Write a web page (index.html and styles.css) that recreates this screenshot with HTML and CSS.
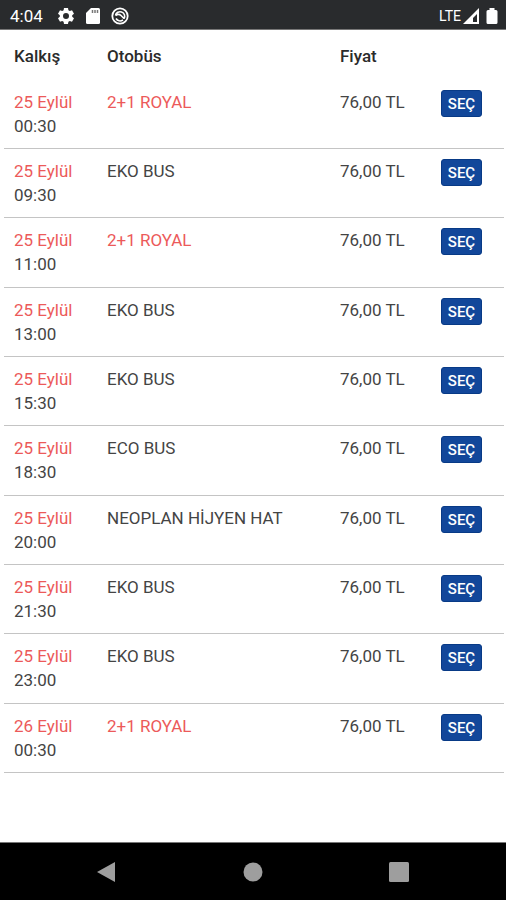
FILE: index.html
```html
<!DOCTYPE html>
<html lang="tr">
<head>
<meta charset="utf-8">
<meta name="viewport" content="width=device-width, initial-scale=1">
<title>Seferler</title>
<link rel="stylesheet" href="styles.css">
</head>
<body>
<header class="status">
  <span class="clock">4:04</span>
  <svg class="icon" viewBox="0 0 18 18" aria-hidden="true"><path fill="#fff" fill-rule="evenodd" d="M7 1h4l.4 2.3 1.400.8L15 3.300l2 3.400-1.800 1.500v1.600L17 11.300l-2 3.400-2.200-.8-1.400.8L11 17H7l-.4-2.300-1.400-.8-2.200.8-2-3.400 1.800-1.500V8.200L1 6.700l2-3.400 2.200.8 1.400-.8zM9 6a3 3 0 1 0 0 6 3 3 0 0 0 0-6z"/></svg>
  <svg class="icon" viewBox="0 0 18 18" aria-hidden="true"><path fill="#fff" d="M7 1h7.500q1.500 0 1.500 1.500v13q0 1.500-1.500 1.500h-11Q2 17 2 15.500V6z"/><path stroke="#777" stroke-width="1.500" d="M8.500 3v3M11 3v3M13.500 3v3"/></svg>
  <svg class="icon" viewBox="0 0 18 18" aria-hidden="true"><g fill="none" stroke="#fff"><circle cx="9" cy="9" r="7.700" stroke-width="1.800"/><path stroke-width="1.600" d="M4.500 8.500C5 5.500 8 4.200 10.500 5c3 1 4 4 2.500 6.500M4.500 8.500c2-1.500 4-1.500 5.500 0l3 3M5 11.500c1.500 2.500 4.500 3 7 1.500"/></g></svg>
  <span class="network">LTE</span>
  <svg class="signal" viewBox="0 0 16 16" aria-hidden="true"><path fill="#fff" fill-rule="evenodd" d="M16 0v16H0zM14 6l-4 4v4h4z"/></svg>
  <svg class="battery" viewBox="0 0 12 18" aria-hidden="true"><path fill="#fff" d="M3.500 1h5v2H10q1.500 0 1.500 1.500v11Q11.500 17 10 17H2Q.5 17 .5 15.500v-11Q.5 3 2 3h1.500z"/></svg>
</header>
<main class="content">
  <table class="trips">
    <colgroup><col class="col-time"><col class="col-bus"><col class="col-price"><col></colgroup>
    <thead><tr><th scope="col">Kalkış</th><th scope="col">Otobüs</th><th scope="col">Fiyat</th><td></td></tr></thead>
    <tbody>
      <tr><td><span class="date">25 Eylül</span>00:30</td><td class="royal">2+1 ROYAL</td><td>76,00 TL</td><td><button class="select" type="button">SEÇ</button></td></tr>
      <tr><td><span class="date">25 Eylül</span>09:30</td><td>EKO BUS</td><td>76,00 TL</td><td><button class="select" type="button">SEÇ</button></td></tr>
      <tr><td><span class="date">25 Eylül</span>11:00</td><td class="royal">2+1 ROYAL</td><td>76,00 TL</td><td><button class="select" type="button">SEÇ</button></td></tr>
      <tr><td><span class="date">25 Eylül</span>13:00</td><td>EKO BUS</td><td>76,00 TL</td><td><button class="select" type="button">SEÇ</button></td></tr>
      <tr><td><span class="date">25 Eylül</span>15:30</td><td>EKO BUS</td><td>76,00 TL</td><td><button class="select" type="button">SEÇ</button></td></tr>
      <tr><td><span class="date">25 Eylül</span>18:30</td><td>ECO BUS</td><td>76,00 TL</td><td><button class="select" type="button">SEÇ</button></td></tr>
      <tr><td><span class="date">25 Eylül</span>20:00</td><td>NEOPLAN HİJYEN HAT</td><td>76,00 TL</td><td><button class="select" type="button">SEÇ</button></td></tr>
      <tr><td><span class="date">25 Eylül</span>21:30</td><td>EKO BUS</td><td>76,00 TL</td><td><button class="select" type="button">SEÇ</button></td></tr>
      <tr><td><span class="date">25 Eylül</span>23:00</td><td>EKO BUS</td><td>76,00 TL</td><td><button class="select" type="button">SEÇ</button></td></tr>
      <tr><td><span class="date">26 Eylül</span>00:30</td><td class="royal">2+1 ROYAL</td><td>76,00 TL</td><td><button class="select" type="button">SEÇ</button></td></tr>
    </tbody>
  </table>
</main>
<nav class="system">
  <button type="button" aria-label="Geri"><svg viewBox="0 0 22 22"><path fill="#9e9e9e" d="M19 1v20L1 11z"/></svg></button>
  <button type="button" aria-label="Ana ekran"><svg viewBox="0 0 22 22"><circle cx="11" cy="11" r="9.500" fill="#9e9e9e"/></svg></button>
  <button type="button" aria-label="Son uygulamalar"><svg viewBox="0 0 22 22"><rect x="1" y="1" width="20" height="20" rx="1.500" fill="#9e9e9e"/></svg></button>
</nav>
</body>
</html>
```
FILE: styles.css
```css
* { box-sizing: border-box; }

body {
  margin: 0;
  min-height: 100vh;
  display: flex;
  flex-direction: column;
  background: #fff;
  color: #444;
  font: 17px/24px Roboto, "Liberation Sans", sans-serif;
}

.status {
  display: flex;
  align-items: center;
  height: 30px;
  padding: 2px 8px 0 10px;
  background: #292b2d;
  border-bottom: 1px solid #777;
  color: #fff;
}
.clock { margin-right: 14px; }
.icon { width: 18px; height: 18px; margin-right: 9px; }
.network { margin-left: auto; font-size: 14px; }
.signal { width: 16px; height: 16px; margin: 0 7px 0 2px; }
.battery { width: 12px; height: 18px; }

.content { flex: 1; padding: 4px 2px 4px 4px; }

.trips {
  width: 100%;
  table-layout: fixed;
  border-collapse: separate;
  border-spacing: 0;
}
.col-time { width: 18.6%; }
.col-bus { width: 46.6%; }
.col-price { width: 20.2%; }

th, td {
  padding: 10px 0 10px 10px;
  text-align: left;
  vertical-align: top;
  white-space: nowrap;
}
th {
  padding-bottom: 12px;
  color: #2b2b2b;
  font-weight: 500;
}
tbody td { border-bottom: 1px solid #c4c4c4; }
tbody tr:nth-child(3n) td { padding-bottom: 11px; }
.date { display: block; }
.date, .royal { color: #ec5a5a; }

.select {
  display: block;
  width: 41px;
  height: 27px;
  padding: 0;
  border: 1px solid #083a86;
  border-radius: 3px;
  background: #12479a;
  color: #fff;
  font: 500 15px/24px Roboto, "Liberation Sans", sans-serif;
}

.system {
  display: flex;
  justify-content: center;
  align-items: center;
  gap: 124px;
  height: 58px;
  background: #000;
  border-top: 1px solid #777;
}
.system button {
  padding: 0;
  border: 0;
  background: none;
}
.system svg { display: block; width: 22px; height: 22px; }
```
